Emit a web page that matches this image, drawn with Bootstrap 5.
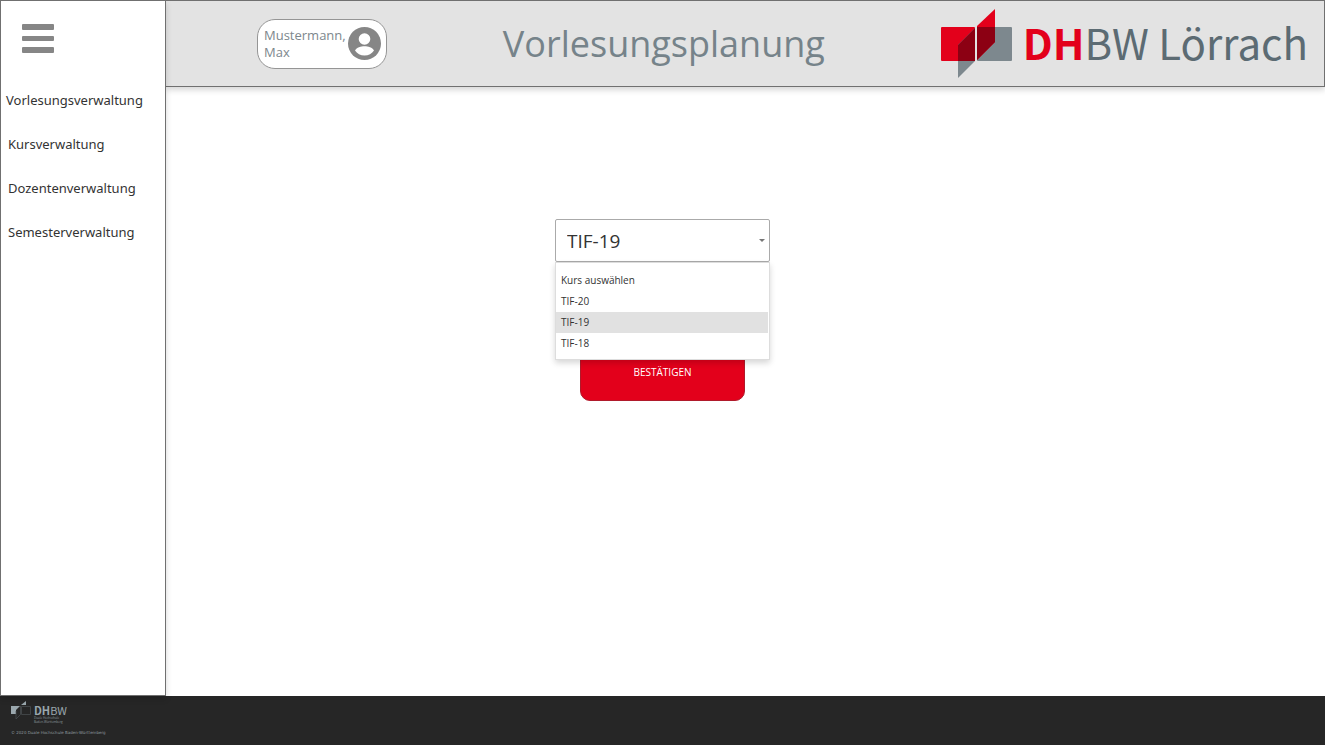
<!DOCTYPE html>
<html lang="de">
<head>
<meta charset="utf-8">
<meta name="viewport" content="width=device-width, initial-scale=1">
<title>Vorlesungsplanung</title>
<link href="https://cdn.jsdelivr.net/npm/bootstrap@5.3.0/dist/css/bootstrap.min.css" rel="stylesheet">
<style>
  body { font-family: "Open Sans", "Noto Sans", sans-serif; color: #333; }
  .side-bar { width: 166px; border: 1px solid #707070; box-shadow: 0 3px 6px rgba(0,0,0,.16); z-index: 2; }
  .menu-toggle { margin: 23px 0 0 21px; line-height: 1; }
  .side-links { margin-top: 37px; gap: 24px; font-family: "Noto Sans", sans-serif; font-size: 13px; line-height: 20px; }
  .side-links .nav-link { color: #333; padding: 0 0 0 7px; }
  .side-links .nav-link.active { padding-left: 5px; }
  .top-bar { height: 87px; padding: 0 16px 0 91px; background: #e3e3e3; border: 1px solid #707070; border-left: 0; box-shadow: 0 3px 6px rgba(0,0,0,.16); }
  .user-pill { width: 130px; height: 50px; padding: 0 5px 0 6px; border: 1px solid #959595; border-radius: 18px; background: #fff; color: #7d878d; font-size: 13px; line-height: 17px; }
  .page-title { font-size: 36px; line-height: 48px; color: #76838a; }
  .logo-text { font-family: "Noto Sans CJK SC", sans-serif; font-size: 42px; line-height: 50px; padding-bottom: 4px; color: #5c6b73; font-weight: 400; }
  .logo-text b { color: #e3001b; font-weight: 700; }
  .course-area { padding: 132px 166px 0 0; }
  .course-picker { width: 215px; }
  .course-select { height: 43px; padding: 0 11px; font-size: 19px; line-height: 28px; color: #333; background: #fff; border: 1px solid #aaa; border-radius: 2px; appearance: none; }
  .caret { right: 5px; top: 20px; border: 3px solid transparent; border-top-color: #777; border-bottom: 0; }
  .course-list { top: 43px; left: 0; z-index: 3; padding: 7px 1px 5px 0; font-size: 10px; line-height: 21px; background: #fff; border: 1px solid #ddd; box-shadow: 0 3px 6px rgba(0,0,0,.16); }
  .course-list li { padding-left: 5px; }
  .course-list li.chosen { background: #e1e1e1; }
  .confirm-btn { width: 165px; height: 58px; margin-top: 81px; border: 1px solid #b01a2b; border-radius: 10px; background: #e3001b; color: #fff; font-size: 10px; }
  .confirm-btn:hover { background: #c40018; color: #fff; }
  .page-foot { height: 49px; padding: 4px 11px 0; background: #262626; color: #8d999f; font-family: "DejaVu Sans", sans-serif; font-size: 4px; line-height: 6px; }
  .foot-logo { gap: 3px; height: 26px; }
  .foot-name { font-family: "Noto Sans CJK SC", sans-serif; font-size: 11px; line-height: 12px; color: #9aa7ad; }
  .foot-sub { font-family: "Open Sans", sans-serif; font-size: 3px; line-height: 4px; }
</style>
</head>
<body class="d-flex flex-column min-vh-100 bg-white">
<div class="d-flex flex-grow-1">
  <aside class="side-bar bg-white flex-shrink-0 position-relative">
    <button class="menu-toggle btn p-0 border-0 d-block" type="button" aria-label="Menü">
      <svg class="d-block" width="32" height="29" viewBox="0 0 32 29" fill="#868686"><rect y="0" width="32" height="6" rx="1"/><rect y="12" width="32" height="5" rx="1"/><rect y="23" width="32" height="6" rx="1"/></svg>
    </button>
    <nav class="side-links nav flex-column">
      <a class="nav-link active" href="#">Vorlesungsverwaltung</a>
      <a class="nav-link" href="#">Kursverwaltung</a>
      <a class="nav-link" href="#">Dozentenverwaltung</a>
      <a class="nav-link" href="#">Semesterverwaltung</a>
    </nav>
  </aside>
  <div class="flex-grow-1 d-flex flex-column">
    <header class="top-bar d-flex align-items-center justify-content-between">
      <button class="user-pill d-flex align-items-center justify-content-between text-start" type="button">
        <span>Mustermann,<br>Max</span>
        <svg class="flex-shrink-0" width="33" height="33" viewBox="0 0 33 33"><circle cx="16.500" cy="16.500" r="16.500" fill="#868686"/><circle cx="16.500" cy="12" r="5.800" fill="#fff"/><path d="M7 23.500C8.500 20.500 13 19.200 16.500 19.200S24.500 20.500 26 23.500C24 26.500 20.500 28.500 16.500 28.500S9 26.500 7 23.500Z" fill="#fff"/></svg>
      </button>
      <h1 class="page-title m-0 fw-normal">Vorlesungsplanung</h1>
      <div class="d-flex align-items-center gap-2">
        <svg width="74" height="70" viewBox="0 0 74 70" aria-hidden="true">
          <rect x="0" y="18" width="34" height="34" rx="1" fill="#e3001b"/>
          <rect x="36" y="18" width="35" height="34" rx="1" fill="#7d888e"/>
          <path d="M17 36L34 19V52L17 69Z" fill="#7d888e"/>
          <path d="M17 36L34 19V52H17Z" fill="#8c0013"/>
          <path d="M36 17L54 0V33L36 51Z" fill="#e3001b"/>
          <path d="M36 18H54V33L36 51Z" fill="#8c0013"/>
        </svg>
        <span class="logo-text text-nowrap"><b>DH</b>BW Lörrach</span>
      </div>
    </header>
    <main class="course-area">
      <form class="course-picker position-relative mx-auto text-center">
        <select class="course-select w-100 d-block" aria-label="Kurs auswählen"><option>TIF-19</option><option>TIF-20</option><option>TIF-18</option></select>
        <span class="caret position-absolute"></span>
        <ul class="course-list list-unstyled position-absolute w-100 m-0 text-start" role="listbox" aria-label="Kurs">
          <li role="option">Kurs auswählen</li>
          <li role="option">TIF-20</li>
          <li class="chosen" role="option" aria-selected="true">TIF-19</li>
          <li role="option">TIF-18</li>
        </ul>
        <button class="confirm-btn btn p-0" type="button">BESTÄTIGEN</button>
      </form>
    </main>
  </div>
</div>
<footer class="page-foot">
  <div class="foot-logo d-flex">
    <svg width="20" height="20" viewBox="0 0 20 20" aria-hidden="true">
      <path d="M0 6H9L5 10V14H0Z" fill="#9aa7ad"/><path d="M10 5L15 1V5Z" fill="#9aa7ad"/>
      <path d="M10.500 6.500H19.500V14.500H10.500ZM5 11V19L9.500 14.500V6" fill="none" stroke="#4c5254" stroke-width=".7"/>
    </svg>
    <div>
      <div class="foot-name mt-1"><b>DH</b>BW</div>
      <div class="foot-sub">Duale Hochschule<br>Baden-Württemberg</div>
    </div>
  </div>
  <div class="mt-1">© 2020 Duale Hochschule Baden-Württemberg</div>
</footer>
<script src="https://cdn.jsdelivr.net/npm/bootstrap@5.3.0/dist/js/bootstrap.bundle.min.js"></script>
</body>
</html>
